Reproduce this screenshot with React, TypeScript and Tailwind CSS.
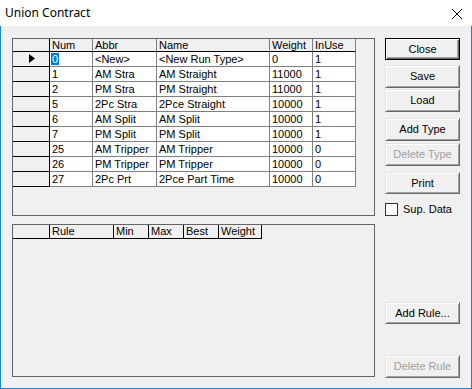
const runTypeCols = [
  { label: "Num", w: "w-[43px]" },
  { label: "Abbr", w: "w-[64px]" },
  { label: "Name", w: "w-[113px]" },
  { label: "Weight", w: "w-[43px]" },
  { label: "InUse", w: "w-[43px]" },
];

const runTypes = [
  ["0", "<New>", "<New Run Type>", "0", "1"],
  ["1", "AM Stra", "AM Straight", "11000", "1"],
  ["2", "PM Stra", "PM Straight", "11000", "1"],
  ["5", "2Pc Stra", "2Pce Straight", "10000", "1"],
  ["6", "AM Split", "AM Split", "10000", "1"],
  ["7", "PM Split", "PM Split", "10000", "1"],
  ["25", "AM Tripper", "AM Tripper", "10000", "0"],
  ["26", "PM Tripper", "PM Tripper", "10000", "0"],
  ["27", "2Pc Prt", "2Pce Part Time", "10000", "0"],
];

const ruleCols = [
  { label: "Rule", w: "w-[64px]" },
  { label: "Min", w: "w-[35px]" },
  { label: "Max", w: "w-[35px]" },
  { label: "Best", w: "w-[35px]" },
  { label: "Weight", w: "w-[43px]" },
];

function Btn({
  label,
  disabled,
  isDefault,
  className = "",
}: {
  label: string;
  disabled?: boolean;
  isDefault?: boolean;
  className?: string;
}) {
  // classic 3d push button; the default one gets a black frame
  const frame = isDefault
    ? "border border-black shadow-[inset_1px_1px_#ffffff,inset_-1px_-1px_#696969,inset_-2px_-2px_#a0a0a0]"
    : "border border-t-[#e3e3e3] border-l-[#e3e3e3] border-r-[#696969] border-b-[#696969] shadow-[inset_1px_1px_#ffffff,inset_-1px_-1px_#a0a0a0]";
  return (
    <div
      className={`w-[75px] flex items-center justify-center bg-[#f0f0f0] ${frame} ${
        disabled ? "text-[#a0a0a0]" : "text-black"
      } ${className}`}
    >
      {label}
    </div>
  );
}

export default function App() {
  return (
    <div className="w-[472px] h-[389px] flex flex-col bg-[#f0f0f0] font-['Liberation_Sans',Arial,sans-serif] text-[11px] text-black">
      {/* title bar */}
      <div className="h-[26px] shrink-0 bg-white flex items-center justify-between pl-[5px] pr-[10px]">
        <span className="font-['Noto_Sans',sans-serif] text-[12px]">Union Contract</span>
        <svg width="10" height="10" viewBox="0 0 10 10" className="mt-[1px]">
          <path d="M0 0 L10 10 M10 0 L0 10" stroke="#000" strokeWidth="1" />
        </svg>
      </div>

      <div className="flex-1 flex border-x border-b border-[#1883d7] pl-[11px] pt-[12px]">
        {/* left: the two grids */}
        <div className="w-[363px] flex flex-col">
          <div className="h-[178px] border border-[#646464] flex flex-col">
            <div className="flex h-[13px] leading-[12px]">
              <div className="w-[37px] border-r border-b border-black" />
              {runTypeCols.map((c) => (
                <div
                  key={c.label}
                  className={`${c.w} pl-[2px] border-r border-b border-r-[#808080] border-b-black`}
                >
                  {c.label}
                </div>
              ))}
            </div>
            {runTypes.map((r, i) => (
              <div key={r[0]} className="flex h-[15px] leading-[14px]">
                <div className="w-[37px] border-r border-b border-black pl-[16px] pt-[2px]">
                  {i === 0 && (
                    <svg width="6" height="9" viewBox="0 0 6 9">
                      <path d="M0 0 L6 4.5 L0 9 Z" fill="#000" />
                    </svg>
                  )}
                </div>
                {r.map((v, j) => (
                  <div
                    key={j}
                    className={`${runTypeCols[j].w} bg-white border-r border-b border-[#808080] ${
                      i === 0 && j === 0 ? "pl-[1px]" : "pl-[2px]"
                    } whitespace-nowrap overflow-hidden`}
                  >
                    {i === 0 && j === 0 ? (
                      <span className="bg-[#0078d7] text-white px-[1px]">{v}</span>
                    ) : (
                      v
                    )}
                  </div>
                ))}
              </div>
            ))}
          </div>

          <div className="mt-[8px] h-[153px] border border-[#646464] flex flex-col">
            <div className="flex h-[14px] leading-[13px]">
              <div className="w-[37px] border-r border-b border-black" />
              {ruleCols.map((c) => (
                <div key={c.label} className={`${c.w} pl-[2px] border-r border-b border-black`}>
                  {c.label}
                </div>
              ))}
            </div>
          </div>
        </div>

        {/* right: buttons */}
        <div className="ml-[10px] flex flex-col">
          <Btn label="Close" isDefault className="h-[22px]" />
          <Btn label="Save" className="mt-[5px] h-[23px]" />
          <Btn label="Load" className="mt-[1px] h-[23px]" />
          <Btn label="Add Type" className="mt-[6px] h-[23px]" />
          <Btn label="Delete Type" disabled className="mt-[2px] h-[23px]" />
          <Btn label="Print" className="mt-[6px] h-[22px]" />
          <div className="mt-[9px] flex items-center h-[13px]">
            <div className="w-[13px] h-[13px] bg-white border border-[#333333]" />
            <span className="ml-[5px]">Sup. Data</span>
          </div>
          <Btn label="Add Rule..." className="mt-[86px] h-[22px]" />
          <Btn label="Delete Rule" disabled className="mt-[31px] h-[23px]" />
        </div>
      </div>
    </div>
  );
}
